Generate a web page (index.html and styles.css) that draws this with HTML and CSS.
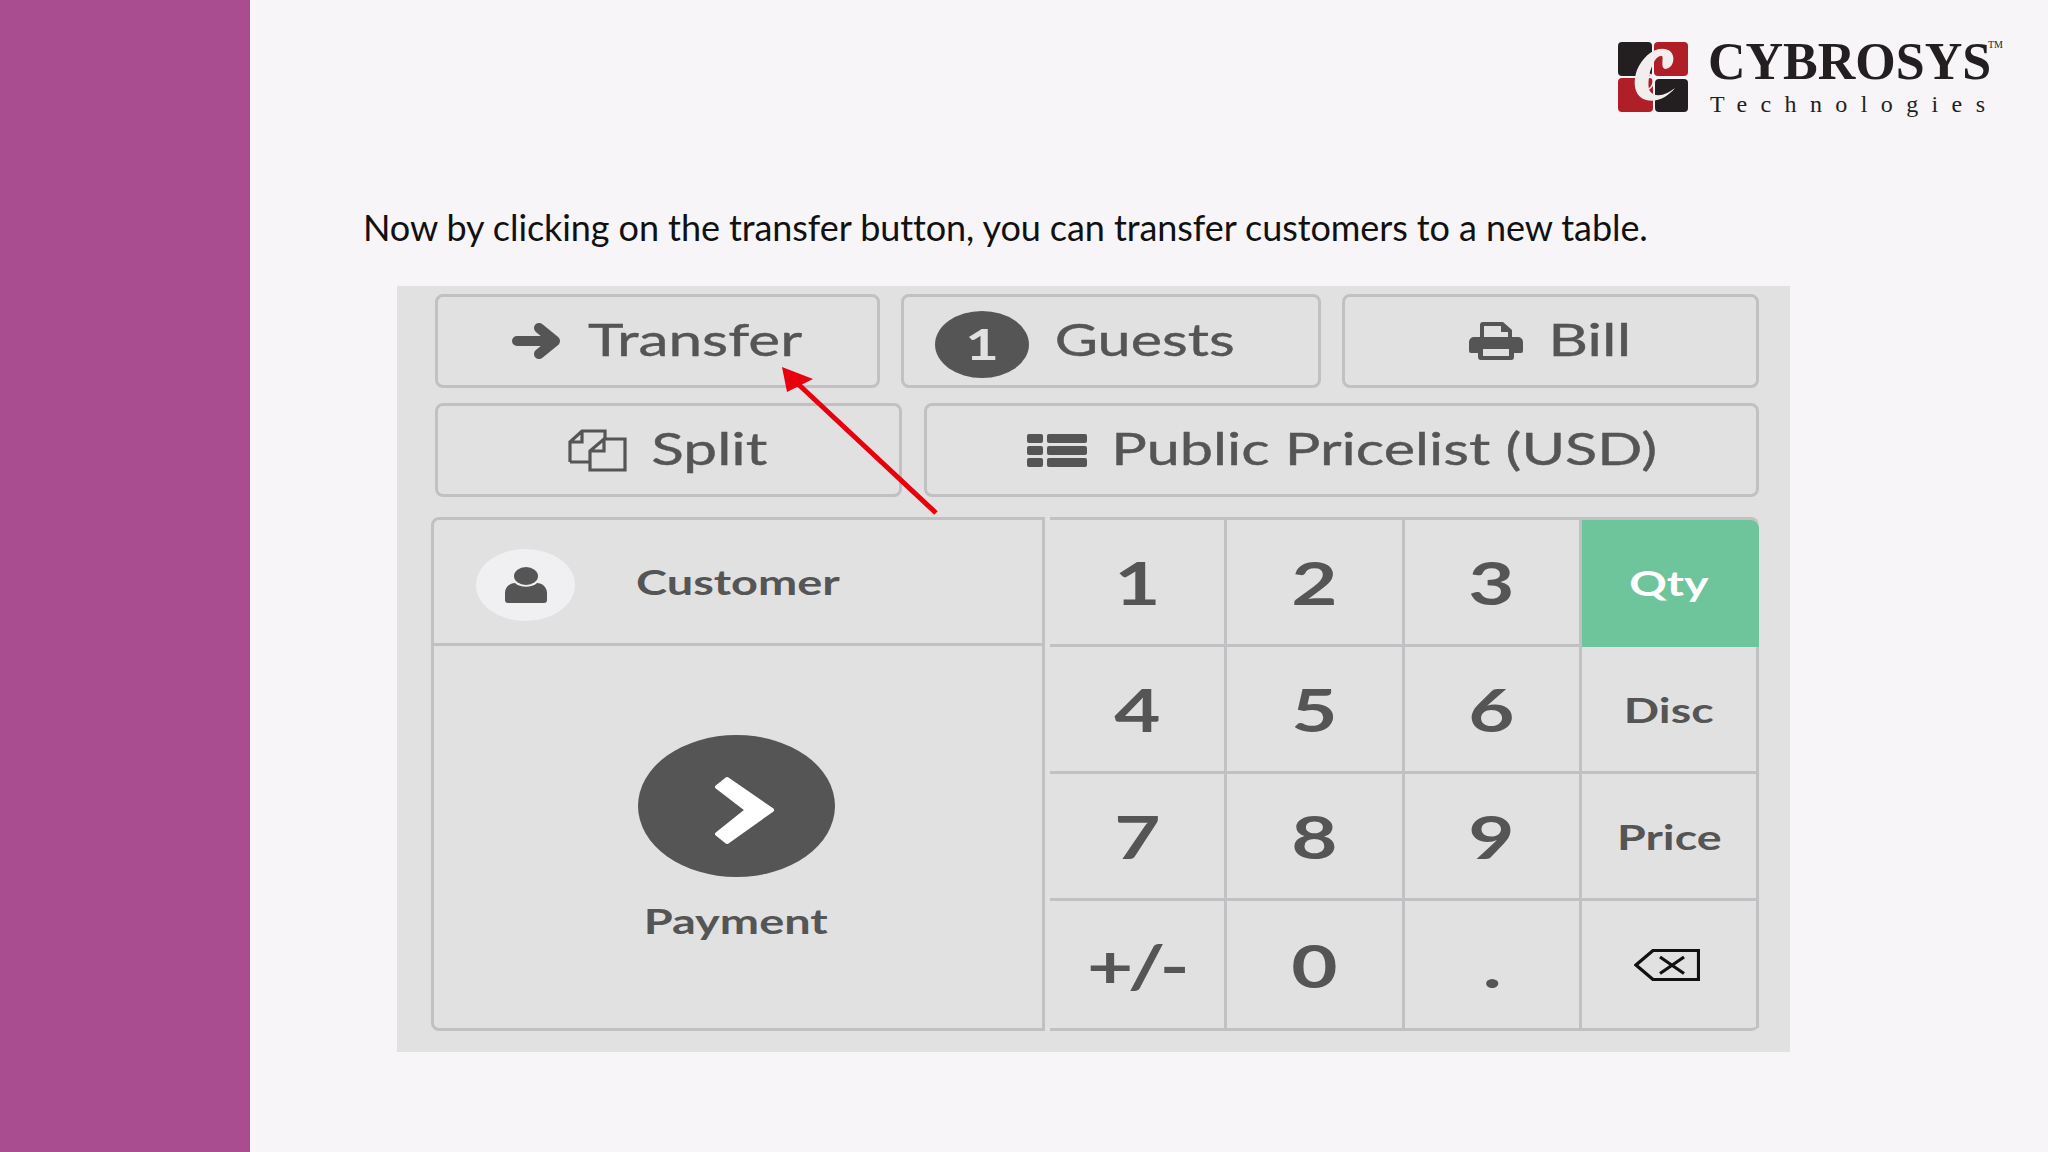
FILE: index.html
```html
<!DOCTYPE html>
<html lang="en">
<head>
    <meta charset="UTF-8">
    <title>Transfer customers</title>
    <link rel="stylesheet" href="styles.css">
</head>
<body>
    <div class="sidebar"></div>

    <div class="slide">
        <div class="logo">
            <svg class="logo-mark" width="70" height="70" viewBox="0 0 70 70">
                <rect x="0" y="0" width="34" height="34" rx="4" fill="#231f20"/>
                <rect x="36" y="0" width="34" height="34" rx="4" fill="#b01e28"/>
                <rect x="0" y="36" width="35" height="34" rx="4" fill="#b01e28"/>
                <rect x="37" y="37" width="33" height="33" rx="4" fill="#231f20"/>
                <path d="M47 27 C56 27 59 12 50 8 C38 3 25 14 19 28 C14 42 17 55 28 58 C38 61 50 55 57 46 C49 52 42 55 35 52 C29 49 30 40 32 30 C35 20 39 13 44 14 C46 16 42 25 47 27 Z" fill="#f3eeee"/>
                <path d="M31 32 C36 34 37 43 31 47" fill="none" stroke="#f3eeee" stroke-width="1.5"/>
            </svg>
            <div class="logo-text">
                <div class="logo-name">CYBROSYS<span class="logo-tm">TM</span></div>
                <div class="logo-sub">Technologies</div>
            </div>
        </div>

        <p class="intro">Now by clicking on the transfer button, you can transfer customers to a new table.</p>

        <div class="panel">
            <div class="btn-row btn-row-top">
                <div class="btn">
                    <svg class="icon" width="50" height="36" viewBox="0 0 50 36">
                        <path d="M5 18 H43 M27 5 L43 18 L27 31" fill="none" stroke="#555" stroke-width="10" stroke-linecap="round" stroke-linejoin="round"/>
                    </svg>
                    <span class="wide wide-transfer">Transfer</span>
                </div>
                <div class="btn btn-guests">
                    <span class="guest-count"><span class="wide-num">1</span></span>
                    <span class="wide wide-guests">Guests</span>
                </div>
                <div class="btn">
                    <svg class="icon" width="56" height="38" viewBox="0 0 56 38">
                        <path fill-rule="evenodd" fill="#555" d="M12 3 a3 3 0 0 1 3 -3 H35 L44 8 V15 H50 a5 5 0 0 1 5 5 V29 a2 2 0 0 1 -2 2 H46 V35 a3 3 0 0 1 -3 3 H13 a3 3 0 0 1 -3 -3 V31 H3 a2 2 0 0 1 -2 -2 V20 a5 5 0 0 1 5 -5 H12 Z M16 4 V15 H40 V10 H33 V4 Z M15 27 V34 H41 V27 Z"/>
                    </svg>
                    <span class="wide wide-bill">Bill</span>
                </div>
            </div>

            <div class="btn-row btn-row-second">
                <div class="btn">
                    <svg class="icon" width="60" height="43" viewBox="0 0 60 43">
                        <path d="M2 33 V13 L14 2 H37 V10 M14 2 V13 H2 M2 33 H22" fill="none" stroke="#555" stroke-width="3.2"/>
                        <path d="M22 41 V22 L36 10 H57 V41 Z M36 10 V22 H22" fill="none" stroke="#555" stroke-width="3.2"/>
                    </svg>
                    <span class="wide wide-split">Split</span>
                </div>
                <div class="btn">
                    <svg class="icon" width="60" height="33" viewBox="0 0 60 33">
                        <g fill="#555">
                            <rect x="0" y="0" width="16" height="9" rx="2"/><rect x="20" y="0" width="40" height="9" rx="2"/>
                            <rect x="0" y="12" width="16" height="9" rx="2"/><rect x="20" y="12" width="40" height="9" rx="2"/>
                            <rect x="0" y="24" width="16" height="9" rx="2"/><rect x="20" y="24" width="40" height="9" rx="2"/>
                        </g>
                    </svg>
                    <span class="wide wide-pricelist">Public Pricelist (USD)</span>
                </div>
            </div>

            <div class="pad">
                <div class="actions">
                    <div class="customer">
                        <div class="avatar">
                            <svg width="42" height="36" viewBox="0 0 42 36">
                                <ellipse cx="21" cy="9" rx="12" ry="9" fill="#555"/>
                                <path d="M0 33 V26 C0 20 5 16 10 16 C15 21 27 21 32 16 C37 16 42 20 42 26 V33 a3 3 0 0 1 -3 3 H3 a3 3 0 0 1 -3 -3 Z" fill="#555"/>
                            </svg>
                        </div>
                        <span class="action-label">Customer</span>
                    </div>
                    <div class="payment">
                        <div class="pay-circle">
                            <svg class="pay-chevron" width="62" height="69" viewBox="0 0 62 69">
                                <path d="M3 11 L13 3 L58 34 L13 66 L3 58 L33 34 Z" fill="#fff" stroke="#fff" stroke-width="4" stroke-linejoin="round"/>
                            </svg>
                        </div>
                        <span class="action-label">Payment</span>
                    </div>
                </div>

                <div class="keys">
                    <div class="key"><span class="num">1</span></div>
                    <div class="key"><span class="num">2</span></div>
                    <div class="key"><span class="num">3</span></div>
                    <div class="key key-mode active"><span class="mode">Qty</span></div>
                    <div class="key"><span class="num">4</span></div>
                    <div class="key"><span class="num">5</span></div>
                    <div class="key"><span class="num">6</span></div>
                    <div class="key key-mode"><span class="mode">Disc</span></div>
                    <div class="key"><span class="num">7</span></div>
                    <div class="key"><span class="num">8</span></div>
                    <div class="key"><span class="num">9</span></div>
                    <div class="key key-mode"><span class="mode">Price</span></div>
                    <div class="key"><span class="num num-sign">+/-</span></div>
                    <div class="key"><span class="num">0</span></div>
                    <div class="key"><span class="num">.</span></div>
                    <div class="key key-mode">
                        <svg class="backspace" width="66" height="32" viewBox="0 0 66 32">
                            <path d="M64.5 1.5 H19 L2 16 L19 30.5 H64.5 Z M26 8 L50 24.5 M50 8 L26 24.5" fill="none" stroke="#111" stroke-width="3.2"/>
                        </svg>
                    </div>
                </div>
            </div>
        </div>

        <svg class="arrow" width="170" height="160" viewBox="0 0 170 160">
            <path d="M3 3 L34 15 L8 28 Z" fill="#e8000d"/>
            <path d="M18 19 L157 149" stroke="#e8000d" stroke-width="5"/>
        </svg>
    </div>
</body>
</html>
```

FILE: styles.css
```css
* {
    margin: 0;
    padding: 0;
    box-sizing: border-box;
}

body {
    width: 2048px;
    height: 1152px;
    display: flex;
    overflow: hidden;
    background: #f7f5f7;
    font-family: 'Lato', 'Liberation Sans', sans-serif;
    color: #555;
}

.sidebar {
    width: 250px;
    background: #a94c90;
}

.slide {
    flex: 1;
    position: relative;
    padding: 40px 45px 0 113px;
}

.logo {
    display: flex;
    justify-content: flex-end;
    gap: 20px;
    height: 72px;
    padding-top: 2px;
}

.logo-text {
    width: 295px;
    font-family: 'Liberation Serif', serif;
    color: #231f20;
}

.logo-name {
    font-size: 52px;
    font-weight: bold;
    line-height: 34px;
    margin-top: 3px;
    position: relative;
    white-space: nowrap;
}

.logo-tm {
    position: absolute;
    top: -5px;
    left: 280px;
    font-size: 10px;
    font-weight: normal;
    line-height: 10px;
}

.logo-sub {
    font-size: 24px;
    letter-spacing: 13.4px;
    line-height: 24px;
    margin-top: 13px;
    margin-left: 2px;
    white-space: nowrap;
}

.intro {
    font-size: 36px;
    line-height: 44px;
    letter-spacing: -0.08px;
    color: #111;
    margin-top: 93px;
    white-space: nowrap;
}

.panel {
    width: 1393px;
    height: 766px;
    margin: 37px 0 0 34px;
    padding: 8px 31px 0 38px;
    background: #e2e1e2;
}

.btn-row {
    display: grid;
    gap: 21px;
    height: 94px;
    margin-bottom: 15px;
}

.btn-row-top {
    grid-template-columns: 445px 420px 417px;
}

.btn-row-second {
    grid-template-columns: 467px 835px;
    gap: 22px;
    margin-bottom: 20px;
}

.btn {
    display: flex;
    align-items: center;
    justify-content: center;
    gap: 25px;
    border: 3px solid #c1c0c2;
    border-radius: 8px;
    font-size: 44px;
    white-space: nowrap;
}

/* the whole screen grab is stretched sideways, so the labels are too */
.wide {
    display: inline-block;
    transform: scaleX(1.37);
    margin-bottom: 5px;
    -webkit-text-stroke: 0.4px #555;
}

.wide-transfer {
    margin-left: 30px;
    margin-right: 30px;
}

.wide-guests {
    margin-left: 24px;
    transform: scaleX(1.35);
}

.wide-bill {
    margin-left: 11px;
    margin-right: 13px;
    transform: scaleX(1.4);
}

.wide-split {
    margin-left: 14px;
    margin-right: 18px;
}

.wide-pricelist {
    margin-left: 70px;
    margin-right: 70px;
    transform: scaleX(1.35);
}

.icon {
    flex-shrink: 0;
}

.guest-count {
    width: 94px;
    height: 67px;
    margin-top: 6px;
    border-radius: 50%;
    background: #555;
    color: #e2e1e2;
    display: flex;
    align-items: center;
    justify-content: center;
    font-weight: bold;
    font-size: 42px;
}

.wide-num {
    display: inline-block;
    transform: scaleX(1.38);
}

.btn-guests {
    justify-content: flex-start;
    padding-left: 31px;
}

.pad {
    display: flex;
    gap: 5px;
    margin-left: -4px;
    height: 514px;
}

.actions {
    width: 614px;
    display: flex;
    flex-direction: column;
    border: 3px solid #c1c0c2;
    border-radius: 8px 0 0 8px;
}

.customer {
    height: 126px;
    display: flex;
    align-items: center;
    gap: 61px;
    padding-left: 42px;
    border-bottom: 3px solid #c1c0c2;
}

.avatar {
    width: 99px;
    height: 72px;
    margin-top: 7px;
    border-radius: 50%;
    background: #f0eff1;
    display: flex;
    align-items: center;
    justify-content: center;
}

.action-label {
    display: inline-block;
    font-size: 34px;
    font-weight: bold;
    transform: scaleX(1.38);
    transform-origin: left center;
}

.payment {
    flex: 1;
    display: flex;
    flex-direction: column;
    align-items: center;
    padding: 89px 4px 0 0;
    gap: 23px;
}

.payment .action-label {
    transform-origin: center;
}

.pay-circle {
    width: 197px;
    height: 142px;
    border-radius: 50%;
    background: #555;
    display: flex;
    align-items: center;
    justify-content: center;
}

.pay-chevron {
    margin: 8px 0 0 18px;
}

.keys {
    flex: 1;
    display: grid;
    grid-template-columns: repeat(4, 1fr);
    grid-template-rows: repeat(4, 1fr);
    border-bottom: 3px solid #c1c0c2;
    border-top: 3px solid #c1c0c2;
    border-radius: 0 8px 8px 0;
}

.key {
    display: flex;
    align-items: center;
    justify-content: center;
    border-right: 3px solid #c1c0c2;
    border-bottom: 3px solid #c1c0c2;
}

.key:nth-last-child(-n+4) {
    border-bottom: none;
}

.key.active {
    background: #6ec49b;
    color: #fff;
    border-color: #6ec49b;
    border-radius: 0 8px 0 0;
}

.num {
    display: inline-block;
    font-size: 60px;
    font-weight: bold;
    transform: scaleX(1.33);
}

.num-sign {
    letter-spacing: -4px;
    margin-right: 4px;
}

.mode {
    display: inline-block;
    font-size: 35px;
    font-weight: bold;
    transform: scaleX(1.33);
}

.backspace {
    margin-right: 3px;
}

.arrow {
    position: absolute;
    left: 529px;
    top: 364px;
}
```
